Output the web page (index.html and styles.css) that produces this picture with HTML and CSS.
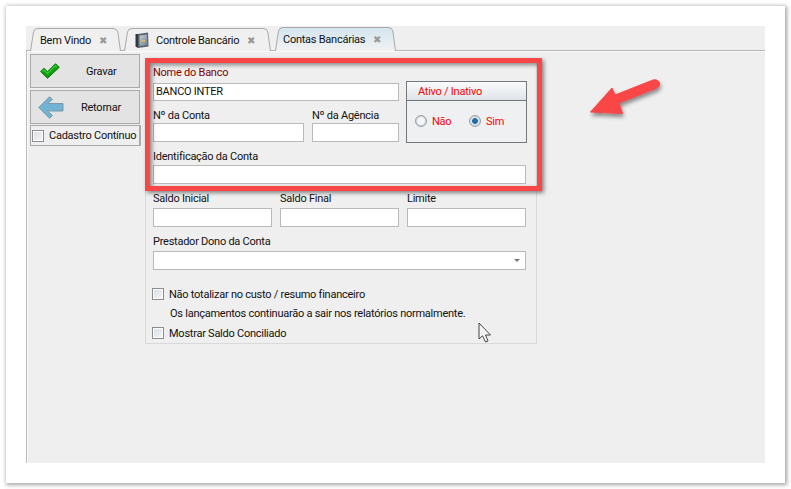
FILE: index.html
```html
<!DOCTYPE html>
<html lang="pt">
<head>
<meta charset="utf-8">
<title>Contas Bancárias</title>
<link rel="stylesheet" href="styles.css">
</head>
<body>
<main class="card">
  <section class="app">
    <nav class="tabs">
      <div class="tab tab-one">
        <svg class="tab-shape" width="92" height="24" viewBox="0 0 92 24"><path d="M0.5 24 L3.5 5 Q4.2 1.5 8 1.5 L83 1.5 Q87 1.5 87.8 5 L90.5 24" fill="#f0f0f0" stroke="#a9a9a9"/></svg>
        <span class="tab-label">Bem Vindo</span><span class="tab-x">✖</span>
      </div>
      <div class="tab tab-two">
        <svg class="tab-shape" width="148" height="24" viewBox="0 0 148 24"><path d="M0.5 24 L3.5 5 Q4.2 1.5 8 1.5 L139 1.5 Q143 1.5 143.8 5 L146.5 24" fill="#f0f0f0" stroke="#a9a9a9"/></svg>
        <svg class="safe" width="15" height="17" viewBox="0 0 15 17"><defs><linearGradient id="safeface" x1="0" y1="0" x2="1" y2="1"><stop offset="0" stop-color="#c3ccd2"/><stop offset="1" stop-color="#75828c"/></linearGradient></defs><path d="M3 2 L13 0.500 L13.500 14.500 L3 16 Z" fill="#56626c"/><path d="M0.500 2 L3 2 L3 16 L0.500 14.500 Z" fill="#2f383f"/><path d="M4.500 3.500 L12 2.500 L12.300 13 L4.500 14 Z" fill="url(#safeface)"/><rect x="7" y="8" width="3" height="1.500" fill="#d8c56b"/></svg>
        <span class="tab-label">Controle Bancário</span><span class="tab-x">✖</span>
      </div>
      <div class="tab tab-three">
        <svg class="tab-shape" width="122" height="25" viewBox="0 0 122 25"><defs><linearGradient id="act" x1="0" y1="0" x2="0" y2="1"><stop offset="0" stop-color="#d3e5ee"/><stop offset="1" stop-color="#f2f2f2"/></linearGradient></defs><path d="M0.5 25 L3.5 5 Q4.2 1.5 8 1.5 L113 1.5 Q117 1.5 117.8 5 L120.5 25" fill="url(#act)" stroke="#a9a9a9"/></svg>
        <span class="tab-label">Contas Bancárias</span><span class="tab-x">✖</span>
      </div>
    </nav>
    <div class="workspace">
      <aside class="side">
        <button class="action" type="button">
          <svg class="action-icon" width="20" height="16" viewBox="0 0 20 16"><path d="M0.700 8.500 L4 5.200 L7.500 8.700 L15.500 0.700 L19.300 4.300 L7.500 15.300 Z" fill="#0d9f0d" stroke="#0b730b" stroke-linejoin="round"/><path d="M2.500 8.500 L4 7 L7.500 10.500 L15.500 2.500 L17 4" fill="none" stroke="#38d038" stroke-width="1.200"/></svg>
          <span class="text-save">Gravar</span>
        </button>
        <button class="action" type="button">
          <svg class="action-icon back-icon" width="26" height="23" viewBox="0 0 26 23"><path d="M0.800 11.500 L11.500 0.800 L14.500 3.500 L9.500 7.500 L25 7.500 L25 15 L9.500 15 L14.500 19.500 L11.500 22.200 Z" fill="#71b3d3" stroke="#7c98a9" stroke-linejoin="round"/></svg>
          <span class="text-back">Retornar</span>
        </button>
        <label class="continuous"><span class="box"></span><span>Cadastro Contínuo</span></label>
      </aside>
      <form class="panel">
        <label class="lbl lbl-req">Nome do Banco</label>
        <div class="top-area">
          <div class="top-left">
            <div class="input filled">BANCO INTER</div>
            <div class="pair">
              <div class="col-conta"><div class="lbl">Nº da Conta</div><div class="input"></div></div>
              <div class="col-ag"><div class="lbl">Nº da Agência</div><div class="input"></div></div>
            </div>
          </div>
          <fieldset class="status">
            <div class="status-head">Ativo / Inativo</div>
            <div class="status-body">
              <div class="opt"><span class="radio"></span><span>Não</span></div>
              <div class="opt"><span class="radio on"></span><span>Sim</span></div>
            </div>
          </fieldset>
        </div>
        <div class="lbl lbl-id">Identificação da Conta</div>
        <div class="input wide"></div>
        <div class="triple">
          <div><div class="lbl">Saldo Inicial</div><div class="input"></div></div>
          <div><div class="lbl">Saldo Final</div><div class="input"></div></div>
          <div><div class="lbl">Limite</div><div class="input"></div></div>
        </div>
        <div class="lbl lbl-owner">Prestador Dono da Conta</div>
        <div class="input wide select"><span class="caret"></span></div>
        <div class="check check-one"><span class="box"></span><span>Não totalizar no custo / resumo financeiro</span></div>
        <p class="note">Os lançamentos continuarão a sair nos relatórios normalmente.</p>
        <div class="check check-two"><span class="box"></span><span>Mostrar Saldo Conciliado</span></div>
      </form>
    </div>
    <div class="highlight"></div>
    <svg class="red-arrow" width="80" height="46" viewBox="0 0 80 46"><defs><filter id="sh" x="-20%" y="-20%" width="150%" height="160%"><feDropShadow dx="1" dy="3" stdDeviation="2" flood-color="#000" flood-opacity=".45"/></filter></defs><path d="M1.500 35 L23 11 L26 18 L64 3 Q69 2 70.500 6 Q71 9 68 11 L30 26 L33.500 36.500 Z" fill="#f94646" stroke="#f94646" stroke-linejoin="round" filter="url(#sh)"/></svg>
    <svg class="pointer" width="14" height="21" viewBox="0 0 14 21"><path d="M1 1 L1 17 L4.500 13.800 L7.500 20 L10 19 L7.500 13 L12.500 13 Z" fill="#f4f4f4" stroke="#333" stroke-width="0.900"/></svg>
  </section>
</main>
</body>
</html>
```
FILE: styles.css
```css
* { box-sizing: border-box; }
html, body { margin: 0; height: 100%; background: #fff; }
body { padding: 6px; font-family: Roboto, "Liberation Sans", sans-serif; font-size: 11px; letter-spacing: -0.25px; color: #111; overflow: hidden; }
.card { width: 779px; height: 477px; padding: 20px; background: #fff; box-shadow: 1px 1px 4px 1px rgba(0,0,0,.35); }
.app { position: relative; width: 739px; height: 437px; background: #efefef; display: flex; flex-direction: column; }

.tabs { height: 25px; display: flex; padding-left: 4px; padding-top: 1px; gap: 3px; border-bottom: 1px solid #b5b5b5; }
.tab { position: relative; height: 24px; padding-top: 2px; display: flex; align-items: center; z-index: 1; white-space: nowrap; }
.tab-shape { position: absolute; left: 0; top: 0; }
.tab-label, .tab-x, .safe { position: relative; }
.tab-one { width: 92px; padding-left: 10px; }
.tab-two { width: 148px; margin-left: -1px; padding-left: 11px; }
.tab-three { width: 122px; height: 25px; margin-top: -1px; padding-left: 8px; }
.safe { margin-right: 6px; flex: none; }
.tab-x { font-size: 10px; color: #999; margin-left: 8px; }

.workspace { flex: 1; display: flex; border-left: 1px solid #bbb; padding: 3px 0 0 3px; box-shadow: inset 1px 1px #fbfbfb; }
.side { width: 115px; flex: none; display: flex; flex-direction: column; gap: 2px; }
.action { width: 110px; height: 34px; padding: 0; display: flex; align-items: center; background: #e3e3e3; border: 1px solid #aaa; font: inherit; letter-spacing: inherit; color: inherit; }
.action-icon { margin-left: 9px; }
.back-icon { margin-left: 7px; }
.text-save { margin-left: 26px; }
.text-back { margin-left: 17px; }
.continuous { width: 111px; height: 21px; margin-top: -1px; display: flex; align-items: center; gap: 5px; padding-left: 1px; border: 1px solid #aaa; border-right-width: 2px; white-space: nowrap; }
.box { flex: none; width: 12px; height: 12px; border: 1px solid #8c8c8c; background: linear-gradient(135deg, #d8dde2, #f5f6f7); box-shadow: inset 0 0 0 1px #fff; }

.panel { width: 392px; height: 283px; margin-top: 7px; padding: 6px 7px 0 7px; border: 1px solid #d9d9d9; border-top: 0; }
.lbl { line-height: 15px; height: 15px; white-space: nowrap; }
.lbl-req { display: block; height: 16px; line-height: 12px; color: #800000; }
.input { height: 19px; background: #fff; border: 1px solid #b9b9b9; }
.filled { height: 18px; padding-left: 2px; line-height: 16px; }
.top-area { display: flex; gap: 7px; align-items: flex-start; }
.top-left { width: 246px; }
.pair { display: flex; gap: 8px; margin-top: 7px; }
.col-conta { width: 151px; }
.col-ag { width: 87px; }
.status { margin: -2px 0 -1px; padding: 0; width: 121px; height: 62px; border: 1px solid #73777c; background: #eff0f2; color: #f00; }
.status-head { height: 19px; padding-left: 11px; line-height: 19px; border-bottom: 1px solid #73777c; background: linear-gradient(#fafbfc, #dfe3e8); }
.status-body { display: flex; align-items: center; height: 40px; padding-left: 8px; }
.opt { width: 54px; display: flex; align-items: center; gap: 5px; }
.radio { flex: none; width: 12px; height: 12px; border-radius: 50%; border: 1px solid #98a2aa; background: radial-gradient(circle, #f6f6f6 40%, #c9ced3 100%); box-shadow: inset 0 0 1px #8b959c; }
.radio.on { background: radial-gradient(circle, #1f6fa8 0 2.600px, #e4e6e8 3.200px); }
.lbl-id { margin-top: 7px; margin-bottom: 1px; }
.wide { width: 373px; }
.triple { display: grid; grid-template-columns: 119px 119px 119px; gap: 8px; margin-top: 7px; }
.triple .lbl { margin-bottom: 2px; }
.lbl-owner { margin-top: 7px; margin-bottom: 2px; }
.select { display: flex; align-items: center; justify-content: flex-end; padding-right: 5px; }
.caret { width: 0; height: 0; border: 3px solid transparent; border-top: 3px solid #777; border-bottom: 0; }
.check { display: flex; align-items: center; gap: 5px; height: 16px; margin-left: -1px; }
.check-one { margin-top: 16px; }
.note { margin: 4px 0 0 17px; line-height: 15px; white-space: nowrap; }
.check-two { margin-top: 4px; }

.highlight { position: absolute; left: 119px; top: 32px; width: 397px; height: 133px; border: 5px solid #f94646; box-shadow: 2px 2px 4px rgba(0,0,0,.45), inset 2px 2px 4px rgba(0,0,0,.45); z-index: 3; }
.red-arrow { position: absolute; left: 563px; top: 51px; z-index: 3; }
.pointer { position: absolute; left: 452px; top: 296px; z-index: 3; }
```
